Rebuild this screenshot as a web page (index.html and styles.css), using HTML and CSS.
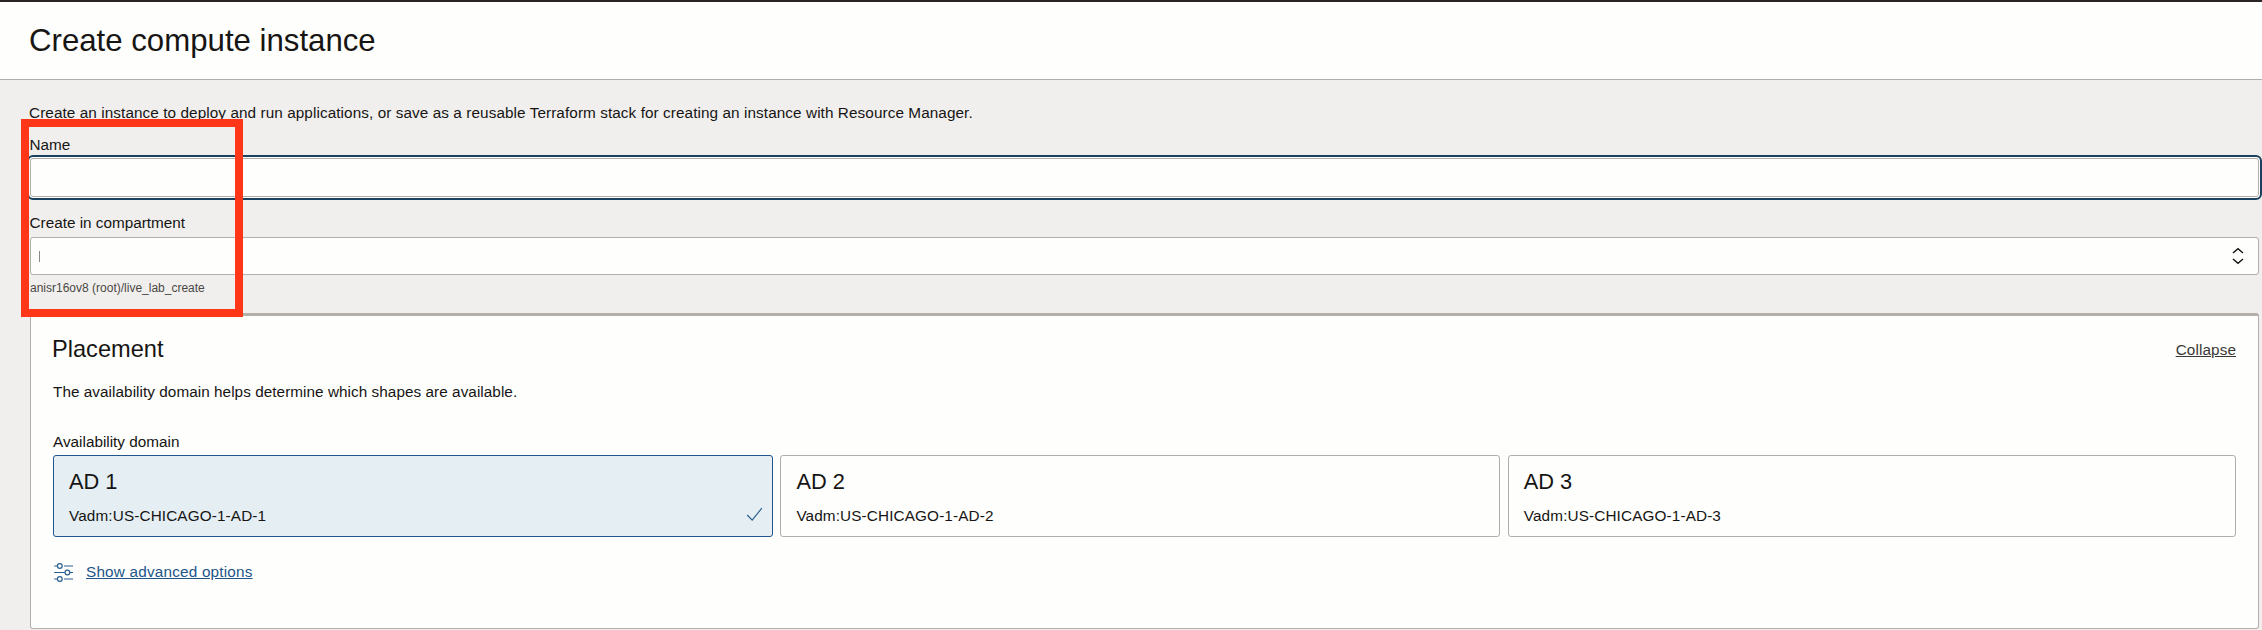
FILE: index.html
```html
<!DOCTYPE html>
<html lang="en">
<head>
<meta charset="utf-8">
<title>Create compute instance</title>
<link rel="stylesheet" href="styles.css">
</head>
<body>
<header class="page-header"><h1 class="page-title"><span>Create compute instance</span></h1></header>
<main class="page-body">
  <p class="text intro"><span>Create an instance to deploy and run applications, or save as a reusable Terraform stack for creating an instance with Resource Manager.</span></p>
  <div class="text field-label name-label"><span>Name</span></div>
  <div class="input input-focused"></div>
  <div class="text field-label compartment-label"><span>Create in compartment</span></div>
  <div class="select">
    <span class="caret"></span>
    <svg class="select-icon" width="12" height="18" viewBox="0 0 12 18"><path d="M1 6 L6 1.8 L11 6 M1 12 L6 16.2 L11 12" fill="none" stroke="#161513" stroke-width="1.5"/></svg>
  </div>
  <div class="helper"><span>anisr16ov8 (root)/live_lab_create</span></div>
  <section class="panel">
    <div class="panel-head">
      <h2 class="panel-title"><span>Placement</span></h2>
      <a class="text collapse">Collapse</a>
    </div>
    <p class="text panel-desc"><span>The availability domain helps determine which shapes are available.</span></p>
    <div class="text ad-label"><span>Availability domain</span></div>
    <div class="cards">
      <div class="card selected">
        <div class="card-title"><span>AD 1</span></div>
        <div class="text card-sub"><span>Vadm:US-CHICAGO-1-AD-1</span></div>
        <svg class="check" width="17" height="15" viewBox="0 0 17 15"><path d="M1.2 8 L6.2 13.2 L15.8 1.2" fill="none" stroke="#2c5f8f" stroke-width="1.2"/></svg>
      </div>
      <div class="card">
        <div class="card-title"><span>AD 2</span></div>
        <div class="text card-sub"><span>Vadm:US-CHICAGO-1-AD-2</span></div>
      </div>
      <div class="card">
        <div class="card-title"><span>AD 3</span></div>
        <div class="text card-sub"><span>Vadm:US-CHICAGO-1-AD-3</span></div>
      </div>
    </div>
    <div class="advanced">
      <svg class="sliders" width="20" height="20" viewBox="0 0 20 20" fill="none" stroke="#2c5f8f" stroke-width="1.2">
        <path d="M0.2 3H3.2M10 3H19M0.2 9.5H10.8M16 9.5H19M0.2 16H3.2M10 16H19"/>
        <circle cx="5.8" cy="3" r="2.4"/><circle cx="13.4" cy="9.5" r="2.4"/><circle cx="5.8" cy="16" r="2.4"/>
      </svg>
      <a class="text advanced-link">Show advanced options</a>
    </div>
  </section>
</main>
<div class="highlight"></div>
</body>
</html>
```

FILE: styles.css
```css
* { box-sizing: border-box; }
body {
  margin: 0;
  height: 630px;
  overflow: hidden;
  position: relative;
  background: #f1efee;
  color: #161513;
  font-family: "Liberation Sans", Arial, sans-serif;
}
h1, h2, p { margin: 0; font-weight: 400; }
.text { font-size: 15.3px; line-height: 20px; white-space: nowrap; }
.page-header {
  height: 80px;
  display: flex;
  align-items: center;
  padding-left: 29px;
  background: #fefefc;
  border-top: 2px solid #2b2524;
  border-bottom: 1px solid #b0aeab;
}
.page-title { font-size: 31.2px; line-height: 40px; }
.page-body { padding: 23px 3px 0 30px; }
.intro { margin-left: -1px; letter-spacing: 0.083px; }
.field-label { margin-left: -0.5px; }
.name-label { margin-top: 12px; }
.input, .select {
  background: #fefefc;
  border: 1px solid #b3aea9;
  border-radius: 3px;
}
.input { height: 39px; margin-top: 3px; }
.input-focused { outline: 2px solid #1b4160; outline-offset: 1px; box-shadow: 0 0 0 1px #fefefc; }
.compartment-label { margin-top: 16px; }
.select {
  height: 38px;
  margin-top: 4px;
  padding: 0 14px 0 8px;
  display: flex;
  align-items: center;
  justify-content: space-between;
}
.caret { width: 1px; height: 11px; background: #8b8985; }
.select-icon { display: block; margin-bottom: 1px; }
.helper { margin-top: 4px; font-size: 12px; line-height: 18px; color: #4a4845; }
.panel {
  height: 316px;
  margin-top: 16px;
  padding: 19px 22px 0;
  background: #fefefc;
  border: 1px solid #b3aea9;
  border-top-width: 3px;
  border-radius: 3px;
}
.panel-head { display: flex; justify-content: space-between; align-items: flex-start; }
.panel-title { margin-left: -1px; font-size: 23.6px; line-height: 28px; }
.collapse { margin-top: 5px; color: #3b3937; text-decoration: underline; letter-spacing: 0.1px; }
.panel-desc { margin-top: 19px; letter-spacing: 0.05px; }
.ad-label { margin-top: 30px; }
.cards { display: grid; grid-template-columns: 720px 720px 1fr; column-gap: 7.4px; margin-top: 3px; }
.card {
  height: 82px;
  padding: 12px 15px 0;
  position: relative;
  border: 1px solid #b0adaa;
  border-radius: 3px;
}
.card.selected { background: #e4eef3; border-color: #22558a; }
.card-title { padding-top: 1px; font-size: 21.8px; line-height: 26px; }
.card-sub { margin-top: 11px; letter-spacing: 0.13px; }
.check { position: absolute; right: 9px; bottom: 14px; }
.advanced { display: flex; margin-top: 25px; gap: 12px; }
.sliders { margin: 1px 0 0 1px; }
.advanced-link { color: #22558a; text-decoration: underline; letter-spacing: 0.2px; }
.highlight {
  position: absolute;
  left: 21px;
  top: 119px;
  width: 222px;
  height: 198px;
  border: 8px solid #ff3617;
}
```
